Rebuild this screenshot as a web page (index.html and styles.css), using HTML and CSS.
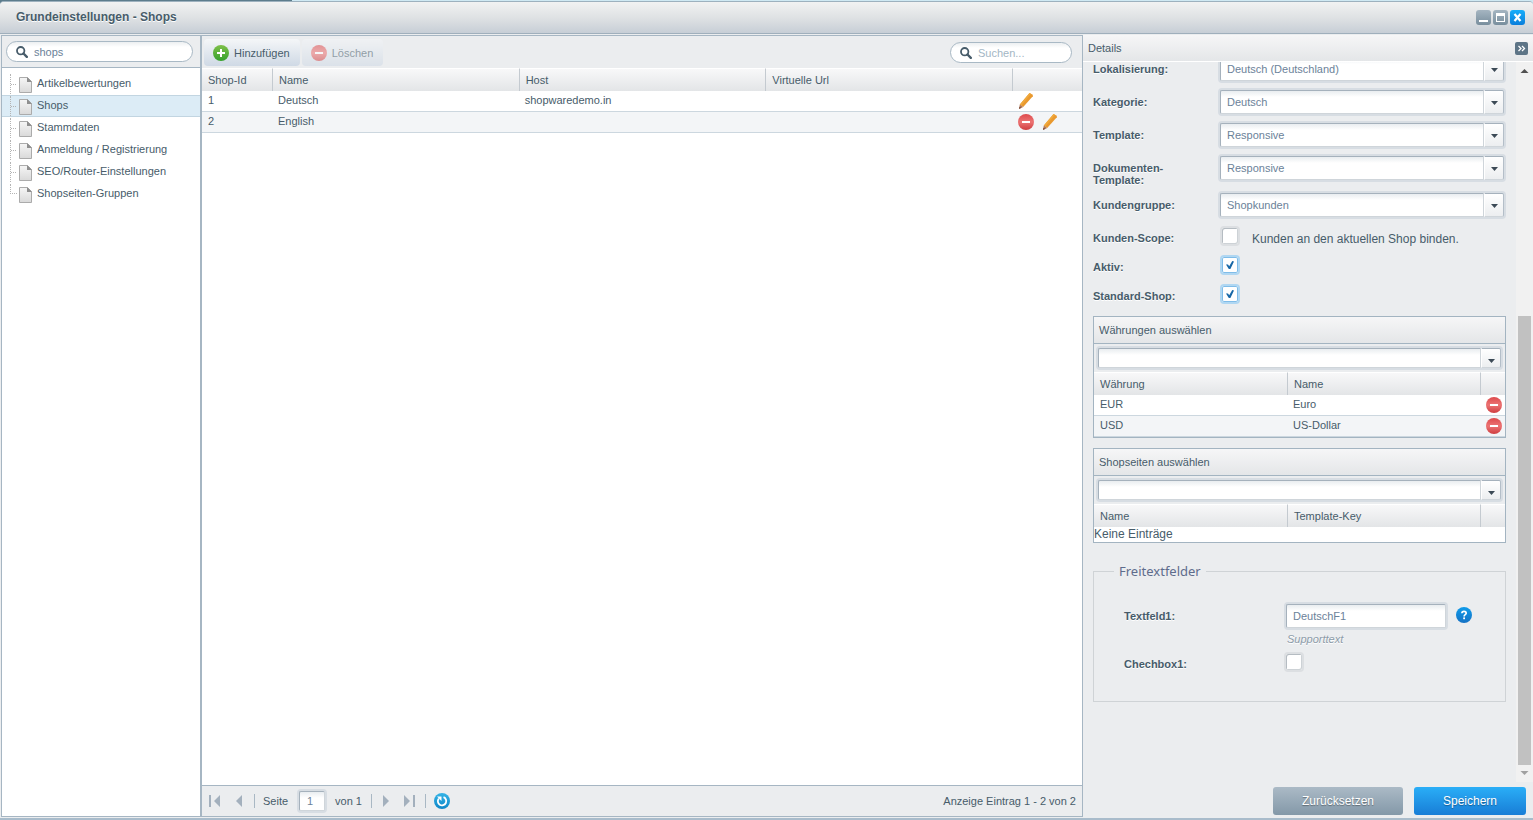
FILE: index.html
```html
<!DOCTYPE html>
<html lang="de">
<head>
<meta charset="utf-8">
<title>Grundeinstellungen - Shops</title>
<link rel="stylesheet" href="styles.css">
</head>
<body>
<svg class="defs" width="0" height="0" aria-hidden="true">
  <defs>
    <linearGradient id="g-red" x1="0" y1="0" x2="0" y2="1"><stop offset="0" stop-color="#dd4a4c"/><stop offset=".5" stop-color="#ec7474"/><stop offset="1" stop-color="#cf3d40"/></linearGradient>
    <linearGradient id="g-green" x1="0" y1="0" x2="0" y2="1"><stop offset="0" stop-color="#7fc04a"/><stop offset="1" stop-color="#35a12c"/></linearGradient>
    <linearGradient id="g-blue" x1="0" y1="0" x2="0" y2="1"><stop offset="0" stop-color="#0f9bea"/><stop offset="1" stop-color="#1572c4"/></linearGradient>
    <linearGradient id="g-cyan" x1="0" y1="0" x2="0" y2="1"><stop offset="0" stop-color="#35b4e6"/><stop offset="1" stop-color="#0e86c8"/></linearGradient>
    <linearGradient id="g-doc" x1="0" y1="0" x2="0" y2="1"><stop offset="0" stop-color="#f6f6f6"/><stop offset="1" stop-color="#d9d9d9"/></linearGradient>
    <symbol id="i-minus" viewBox="0 0 16 16"><circle cx="8" cy="8" r="8" fill="url(#g-red)"/><rect x="4" y="7" width="8" height="2" fill="#fff"/></symbol>
    <symbol id="i-plus" viewBox="0 0 16 16"><circle cx="8" cy="8" r="8" fill="url(#g-green)"/><path d="M7 4h2v3h3v2H9v3H7V9H4V7h3z" fill="#fff"/></symbol>
    <symbol id="i-pencil" viewBox="0 0 16 16"><path d="M11.500 0 14.800 1.800 14.800 3.200 5.200 14 1.800 11.500z" fill="#e9992f"/><path d="M11.500 0 13 .8 3.300 12.500 1.800 11.500z" fill="#f0a93c"/><path d="M1.800 11.500 5.200 14 1 16z" fill="#b0785a"/><path d="M1.300 13.700 3.500 14.800 1 16z" fill="#7d4f3c"/></symbol>
    <symbol id="i-doc" viewBox="0 0 13 16"><path d="M.5.500h8l4 4v11H.5z" fill="url(#g-doc)" stroke="#ababab"/><path d="M8 0l5 5H8z" fill="#8f8f8f"/></symbol>
    <symbol id="i-search" viewBox="0 0 12 12"><circle cx="4.700" cy="4.700" r="3.700" fill="none" stroke="#475c6a" stroke-width="1.800"/><path d="M7.500 7.500 10.800 10.800" stroke="#475c6a" stroke-width="2.400" stroke-linecap="round"/></symbol>
    <symbol id="i-down" viewBox="0 0 7 4"><path d="M0 0h7L3.500 4z" fill="#3c4a56"/></symbol>
    <symbol id="i-prev" viewBox="0 0 8 12"><path d="M7 0v12L1 6z" fill="#a3b0bd"/></symbol>
    <symbol id="i-first" viewBox="0 0 12 12"><path d="M0 0h2v12H0zM11 0v12L5 6z" fill="#a3b0bd"/></symbol>
  </defs>
</svg>

<div class="window">
  <header class="titlebar">
    <h1 class="window-title">Grundeinstellungen - Shops</h1>
    <button class="win-btn" aria-label="Minimieren"><svg width="15" height="15" viewBox="0 0 15 15"><path d="M3 10h9v2H3z" fill="#fff"/></svg></button>
    <button class="win-btn" aria-label="Maximieren"><svg width="15" height="15" viewBox="0 0 15 15"><path d="M3 3h9v9H3zM4 6v5h7V6z" fill="#fff" fill-rule="evenodd"/></svg></button>
    <button class="win-btn win-close" aria-label="Schließen"><svg width="15" height="15" viewBox="0 0 15 15"><path d="M4.500 4l6 7M10.500 4l-6 7" stroke="#fff" stroke-width="2.200"/></svg></button>
  </header>

  <div class="workspace">
    <nav class="sidebar">
      <div class="side-search">
        <label class="search"><svg width="12" height="12"><use href="#i-search"/></svg><input type="text" value="shops" aria-label="Navigation durchsuchen"></label>
      </div>
      <ul class="tree">
        <li><a href="#"><svg width="13" height="16"><use href="#i-doc"/></svg>Artikelbewertungen</a></li>
        <li class="selected"><a href="#"><svg width="13" height="16"><use href="#i-doc"/></svg>Shops</a></li>
        <li><a href="#"><svg width="13" height="16"><use href="#i-doc"/></svg>Stammdaten</a></li>
        <li><a href="#"><svg width="13" height="16"><use href="#i-doc"/></svg>Anmeldung / Registrierung</a></li>
        <li><a href="#"><svg width="13" height="16"><use href="#i-doc"/></svg>SEO/Router-Einstellungen</a></li>
        <li><a href="#"><svg width="13" height="16"><use href="#i-doc"/></svg>Shopseiten-Gruppen</a></li>
      </ul>
    </nav>

    <main class="shops">
      <div class="toolbar">
        <button class="tool-btn"><svg width="16" height="16"><use href="#i-plus"/></svg>Hinzufügen</button>
        <button class="tool-btn" disabled><svg width="16" height="16"><use href="#i-minus"/></svg>Löschen</button>
        <label class="search search-grid"><svg width="12" height="12"><use href="#i-search"/></svg><input type="text" placeholder="Suchen..." aria-label="Suchen"></label>
      </div>
      <div class="grid-body">
        <table class="grid">
          <colgroup><col class="col-id"><col><col><col><col class="col-actions"></colgroup>
          <thead><tr><th>Shop-Id</th><th>Name</th><th>Host</th><th>Virtuelle Url</th><th></th></tr></thead>
          <tbody>
            <tr><td>1</td><td>Deutsch</td><td>shopwaredemo.in</td><td></td>
              <td><div class="actions"><button class="icon-btn" aria-label="Bearbeiten"><svg width="16" height="16"><use href="#i-pencil"/></svg></button></div></td></tr>
            <tr><td>2</td><td>English</td><td></td><td></td>
              <td><div class="actions"><button class="icon-btn" aria-label="Löschen"><svg width="16" height="16"><use href="#i-minus"/></svg></button><button class="icon-btn" aria-label="Bearbeiten"><svg width="16" height="16"><use href="#i-pencil"/></svg></button></div></td></tr>
          </tbody>
        </table>
      </div>
      <footer class="pager">
        <button class="icon-btn" aria-label="Erste Seite"><svg width="12" height="12"><use href="#i-first"/></svg></button>
        <button class="icon-btn prev" aria-label="Vorherige Seite"><svg width="8" height="12"><use href="#i-prev"/></svg></button>
        <span class="sep"></span>
        <label for="page">Seite</label>
        <span class="frame page-frame"><input id="page" type="text" value="1"></span>
        <span>von 1</span>
        <span class="sep"></span>
        <button class="icon-btn next" aria-label="Nächste Seite"><svg class="flip" width="8" height="12"><use href="#i-prev"/></svg></button>
        <button class="icon-btn last" aria-label="Letzte Seite"><svg class="flip" width="12" height="12"><use href="#i-first"/></svg></button>
        <span class="sep"></span>
        <button class="icon-btn reload" aria-label="Aktualisieren"><svg width="16" height="16" viewBox="0 0 16 16"><circle cx="8" cy="8" r="8" fill="url(#g-cyan)"/><path d="M9.500 4.200A4.200 4.200 0 1 1 4.800 5.500" fill="none" stroke="#fff" stroke-width="1.800"/><path d="M3 3.500h4.500V8z" fill="#fff"/></svg></button>
        <span class="pager-info">Anzeige Eintrag 1 - 2 von 2</span>
      </footer>
    </main>

    <aside class="details">
      <div class="details-head">
        <h2>Details</h2>
        <button class="collapse" aria-label="Einklappen"><svg width="13" height="13" viewBox="0 0 13 13"><path d="M3.500 4l2.500 2.500L3.500 9M7 4l2.500 2.500L7 9" fill="none" stroke="#fff" stroke-width="1.300"/></svg></button>
      </div>
      <div class="details-body">
        <form class="form" id="shop-form">
          <div class="fields">
            <div class="row"><label for="locale">Lokalisierung:</label><span class="frame combo"><select id="locale"><option>Deutsch (Deutschland)</option></select><span class="trigger"><svg width="7" height="4"><use href="#i-down"/></svg></span></span></div>
            <div class="row"><label for="category">Kategorie:</label><span class="frame combo"><select id="category"><option>Deutsch</option></select><span class="trigger"><svg width="7" height="4"><use href="#i-down"/></svg></span></span></div>
            <div class="row"><label for="template">Template:</label><span class="frame combo"><select id="template"><option>Responsive</option></select><span class="trigger"><svg width="7" height="4"><use href="#i-down"/></svg></span></span></div>
            <div class="row"><label for="doc-template">Dokumenten-<br>Template:</label><span class="frame combo"><select id="doc-template"><option>Responsive</option></select><span class="trigger"><svg width="7" height="4"><use href="#i-down"/></svg></span></span></div>
            <div class="row"><label for="group">Kundengruppe:</label><span class="frame combo"><select id="group"><option>Shopkunden</option></select><span class="trigger"><svg width="7" height="4"><use href="#i-down"/></svg></span></span></div>
            <div class="row check-row"><label for="scope">Kunden-Scope:</label><input class="check" id="scope" type="checkbox"><span class="hint">Kunden an den aktuellen Shop binden.</span></div>
            <div class="row check-row"><label for="active">Aktiv:</label><input class="check" id="active" type="checkbox" checked></div>
            <div class="row check-row"><label for="default">Standard-Shop:</label><input class="check" id="default" type="checkbox" checked></div>
          </div>

          <section class="panel">
            <h3>Währungen auswählen</h3>
            <div class="picker"><span class="frame combo"><select aria-label="Währungen auswählen"><option></option></select><span class="trigger"><svg width="7" height="4"><use href="#i-down"/></svg></span></span></div>
            <table class="grid">
              <colgroup><col><col><col class="col-remove"></colgroup>
              <thead><tr><th>Währung</th><th>Name</th><th></th></tr></thead>
              <tbody>
                <tr><td>EUR</td><td>Euro</td><td><div class="actions"><button type="button" class="icon-btn" aria-label="EUR entfernen"><svg width="16" height="16"><use href="#i-minus"/></svg></button></div></td></tr>
                <tr><td>USD</td><td>US-Dollar</td><td><div class="actions"><button type="button" class="icon-btn" aria-label="USD entfernen"><svg width="16" height="16"><use href="#i-minus"/></svg></button></div></td></tr>
              </tbody>
            </table>
          </section>

          <section class="panel">
            <h3>Shopseiten auswählen</h3>
            <div class="picker"><span class="frame combo"><select aria-label="Shopseiten auswählen"><option></option></select><span class="trigger"><svg width="7" height="4"><use href="#i-down"/></svg></span></span></div>
            <table class="grid">
              <colgroup><col><col><col class="col-remove"></colgroup>
              <thead><tr><th>Name</th><th>Template-Key</th><th></th></tr></thead>
            </table>
            <p class="empty">Keine Einträge</p>
          </section>

          <fieldset class="free">
            <legend>Freitextfelder</legend>
            <div class="row"><label for="text1">Textfeld1:</label>
              <div class="text-field"><span class="frame"><input id="text1" type="text" value="DeutschF1"></span><span class="support">Supporttext</span></div>
              <button type="button" class="icon-btn help" aria-label="Hilfe"><svg width="16" height="16" viewBox="0 0 16 16"><circle cx="8" cy="8" r="8" fill="url(#g-blue)"/><path d="M5.900 6.300C5.900 3.600 10.200 3.700 10.200 6.200 10.200 7.700 8.100 7.700 8.100 9.400" fill="none" stroke="#fff" stroke-width="1.700"/><rect x="7.200" y="10.400" width="1.800" height="1.800" fill="#fff"/></svg></button>
            </div>
            <div class="row check-row"><label for="check1">Chechbox1:</label><input class="check" id="check1" type="checkbox"></div>
          </fieldset>
        </form>
        <div class="scrollbar" aria-hidden="true">
          <svg class="arrow" width="17" height="17" viewBox="0 0 17 17"><path d="M4.500 11h8l-4-4z" fill="#505050"/></svg>
          <div class="track"><div class="thumb"></div></div>
          <svg class="arrow" width="17" height="17" viewBox="0 0 17 17"><path d="M4.500 6h8l-4 4z" fill="#a0a0a0"/></svg>
        </div>
      </div>
      <footer class="details-foot">
        <button type="reset" form="shop-form" class="btn btn-reset">Zurücksetzen</button>
        <button type="submit" form="shop-form" class="btn btn-save">Speichern</button>
      </footer>
    </aside>
  </div>
</div>
</body>
</html>
```
FILE: styles.css
```css
*, *::before, *::after { box-sizing: border-box; }

body {
  margin: 0;
  height: 100vh;
  padding-top: 1px;
  display: flex;
  flex-direction: column;
  overflow: hidden;
  background: linear-gradient(90deg, #5c7c8c 292px, #cfe9f3 292px);
  font: 11px/12px "Liberation Sans", Arial, sans-serif;
  color: #475c6a;
}

h1, h2, h3, p, ul, fieldset { margin: 0; padding: 0; }
button, input, select { font: inherit; color: inherit; margin: 0; }
button { cursor: pointer; }
svg { display: block; flex: none; }
.defs { position: absolute; }

.window {
  flex: 1;
  min-height: 0;
  display: flex;
  flex-direction: column;
  background: #ebedef;
  border-top: 1px solid #9db1be;
  border-bottom: 2px solid #a9bccb;
  border-radius: 4px 4px 0 0;
}

/* Title bar */
.titlebar {
  display: flex;
  align-items: center;
  gap: 2px;
  height: 32px;
  padding: 0 8px 0 16px;
  background: linear-gradient(#f1f2f2, #dfe2e4 50%, #c7ced6);
  border-bottom: 1px solid #9fafbc;
  border-radius: 4px 4px 0 0;
}
.window-title {
  flex: 1;
  padding-bottom: 2px;
  font-size: 12px;
  line-height: 16px;
  text-shadow: 0 1px 0 #fff;
}
.win-btn {
  width: 15px;
  height: 15px;
  padding: 0;
  border: 0;
  border-radius: 3px;
  background: linear-gradient(#a5b5c1, #788e9d);
}
.win-close { background: linear-gradient(#18aefa, #0a7edb); }

.workspace {
  flex: 1;
  min-height: 0;
  margin: 1px 0 1px 1px;
  display: grid;
  grid-template-columns: 199px minmax(0, 1fr) 450px;
  background: #ebedef;
}

/* Search boxes */
.search {
  display: flex;
  align-items: center;
  gap: 6px;
  height: 21px;
  padding: 0 9px;
  border: 1px solid #a9b9c5;
  border-radius: 11px;
  background: linear-gradient(#eceff1, #fff 5px);
}
.search input {
  flex: 1;
  min-width: 0;
  padding: 0;
  border: 0;
  outline: 0;
  background: none;
  color: #6b8299;
}
.search input::placeholder { color: #a3b6c4; opacity: 1; }
.search-grid { width: 122px; margin-left: auto; }

/* Sidebar */
.sidebar {
  border: 1px solid #a6b6c3;
  border-right: 0;
  background: #fff;
}
.side-search {
  height: 32px;
  padding: 5px 7px 0 4px;
  border-bottom: 1px solid #a6b6c3;
  background: #ebedef;
}
.tree { padding-top: 5px; list-style: none; }
.tree li {
  height: 22px;
  display: flex;
  border: 1px solid transparent;
  border-width: 1px 0;
}
.tree li::before {
  content: "";
  width: 7px;
  height: 10px;
  margin-left: 8px;
  border-left: 1px dotted #b4b4b4;
  border-bottom: 1px dotted #b4b4b4;
}
.tree li:not(:last-child)::before {
  height: 20px;
  border-bottom: 0;
  background: repeating-linear-gradient(90deg, #b4b4b4 0 1px, transparent 1px 2px) 0 10px / 7px 1px no-repeat;
}
.tree li.selected { background: #dcecf6; border-color: #c2d5e1; }
.tree a {
  flex: 1;
  display: flex;
  align-items: center;
  gap: 5px;
  padding: 0 0 2px 2px;
  color: inherit;
  text-decoration: none;
}
.tree svg { margin-top: 3px; }

/* Shop list */
.shops {
  display: flex;
  flex-direction: column;
  min-height: 0;
  border: 1px solid #a6b6c3;
  border-left-width: 2px;
}
.toolbar {
  display: flex;
  align-items: center;
  gap: 2px;
  height: 32px;
  padding: 1px 10px 0 2px;
}
.tool-btn {
  display: flex;
  align-items: center;
  gap: 5px;
  height: 27px;
  padding: 0 10px 0 9px;
  border: 0;
  border-radius: 4px;
  background: linear-gradient(#f4f6f8, #cfd9e5);
}
.tool-btn:disabled { opacity: .55; color: #475c6a; }
.grid-body { flex: 1; min-height: 0; background: #fff; }

.grid { width: 100%; table-layout: fixed; border-collapse: separate; border-spacing: 0; }
.grid th {
  height: 23px;
  padding: 0 6px;
  border-top: 1px solid #fff;
  border-left: 1px solid #c4cad0;
  background: linear-gradient(#f8f8f9, #e3e5e7);
  font-weight: normal;
  text-align: left;
}
.grid th:first-child { border-left: 0; }
.grid td {
  height: 21px;
  padding: 0 6px 2px;
  border-bottom: 1px solid #ccd7df;
  background: #fff;
}
.grid tr:nth-child(even) td { background: #f3f5f7; }
.grid td:last-child { padding: 0 0 0 6px; }
.col-id { width: 70px; }
.col-actions { width: 70px; }
.col-remove { width: 25px; }
.actions { display: flex; gap: 8px; }
.icon-btn { padding: 0; border: 0; background: none; }

/* Pager */
.pager {
  display: flex;
  align-items: center;
  height: 31px;
  padding: 0 6px 0 7px;
  border-top: 1px solid #a6b6c3;
}
.prev { margin: 0 2px 0 14px; }
.next { margin-left: 11px; }
.last { margin: 0 1px 0 13px; }
.sep { width: 1px; height: 14px; margin: 0 8px 0 9px; background: #a9b8c4; }
.sep + .next { margin-left: 2px; }
.page-frame { width: 30px; margin: 0 8px 0 9px; }
.page-frame input { width: 100%; height: 20px; padding: 0 7px; }
.flip { transform: scaleX(-1); }
.pager-info { margin-left: auto; }

/* Framed inputs */
.frame {
  display: flex;
  border: 2px solid #d7dde3;
  border-radius: 4px;
  background: #d7dde3;
}
.frame input, .combo select {
  flex: 1;
  min-width: 0;
  border: 1px solid #a5b1bc;
  border-right-color: #cfd5da;
  border-bottom-color: #cfd5da;
  border-radius: 2px;
  outline: 0;
  background: linear-gradient(#e9edf0, #fff 6px);
  color: #6b8299;
}
.combo select {
  appearance: none;
  padding: 0 6px;
  border-radius: 2px 0 0 2px;
}
.trigger {
  width: 20px;
  display: grid;
  place-items: center;
  padding-top: 1px;
  border: 1px solid #a5b1bc;
  border-left-color: #fff;
  border-right-color: #b4bec8;
  border-bottom-color: #cfd5da;
  border-radius: 0 2px 2px 0;
  background: linear-gradient(#fff, #eceef0);
  pointer-events: none;
}

/* Details */
.details { display: flex; flex-direction: column; min-height: 0; }
.details-head {
  display: flex;
  align-items: center;
  justify-content: space-between;
  height: 27px;
  padding: 0 5px;
  border-bottom: 1px solid #fff;
  background: linear-gradient(#f6f6f7, #e4e6e8);
}
.details-head h2 { font-size: 11px; font-weight: normal; }
.collapse {
  width: 13px;
  height: 13px;
  padding: 0;
  border: 0;
  border-radius: 2px;
  background: #5d7486;
}
.details-body { flex: 1; min-height: 0; display: flex; overflow: hidden; }
.form { flex: 1; min-width: 0; padding: 0 10px; }
/* the form is scrolled down, so its first row is cut by the header */
.fields { margin-top: -7px; display: grid; gap: 5px; }
.row { display: flex; align-items: flex-start; text-shadow: 0 1px 0 #fff; }
.row > label { width: 125px; padding-top: 8px; font-weight: bold; }
.row .combo { flex: 1; height: 28px; }
.check-row { height: 24px; }
.check {
  appearance: none;
  position: relative;
  width: 20px;
  height: 20px;
  margin: 2px 0 0 2px;
  border: 2px solid #dcdfe2;
  border-radius: 4px;
  background: #fff;
  box-shadow: inset 1px 1px 0 #b5bcc2, inset -1px -1px 0 #cdd2d6;
}
.check:checked {
  border-color: #b0d7f2;
  box-shadow: inset 0 0 0 1px #7fbce8;
}
.check:checked::after {
  content: "";
  position: absolute;
  inset: 4px;
  background: #1767a6;
  clip-path: polygon(0 45%, 25% 45%, 40% 65%, 78% 0, 100% 5%, 55% 100%, 35% 100%);
}
.hint { margin-left: 12px; padding-top: 8px; font-size: 12px; line-height: 14px; text-shadow: none; }

.panel { margin-top: 10px; border: 1px solid #a3b4c1; }
.panel h3 {
  height: 27px;
  padding: 7px 5px;
  border-bottom: 1px solid #a3b4c1;
  background: linear-gradient(#f6f6f7, #e4e6e8);
  font-size: 11px;
  font-weight: normal;
}
.picker { padding: 2px; }
.picker .combo { height: 24px; }
.picker .trigger { padding-top: 5px; }
.empty { background: #fff; font-size: 12px; line-height: 15px; }

.free {
  min-width: 0;
  margin-top: 20px;
  padding: 23px 30px 27px;
  border: 1px solid #cfd3d6;
}
.free legend {
  margin-left: -10px;
  padding: 0 5px;
  font: 13px/16px "Noto Sans", "Open Sans", sans-serif;
  color: #5e6c8c;
}
.free .row > label { width: 160px; }
.free .row + .row { margin-top: 5px; }
.free .check { margin-left: 0; }
.text-field { width: 164px; display: grid; gap: 3px; }
.text-field input { height: 24px; padding: 0 6px; }
.support { padding-left: 3px; font-style: italic; color: #8c9ba8; }
.help { margin: 5px 0 0 8px; }

.scrollbar { width: 17px; display: flex; flex-direction: column; background: #f1f1f1; }
.track { flex: 1; display: grid; align-items: end; grid-template-rows: 237fr 449fr; }
.thumb { grid-row: 2; height: 100%; margin: 0 2px; background: #c1c1c1; }

.details-foot {
  display: flex;
  justify-content: flex-end;
  gap: 11px;
  padding: 5px 7px 2px;
}
.btn {
  height: 28px;
  border: 0;
  border-radius: 3px;
  color: #fff;
  font-size: 12px;
  text-shadow: 0 1px 1px rgba(0, 0, 0, .35);
}
.btn-reset { width: 130px; background: linear-gradient(#abbac6, #8398a8); }
.btn-save { width: 112px; background: linear-gradient(#2aaef7, #187dd6); }
```
